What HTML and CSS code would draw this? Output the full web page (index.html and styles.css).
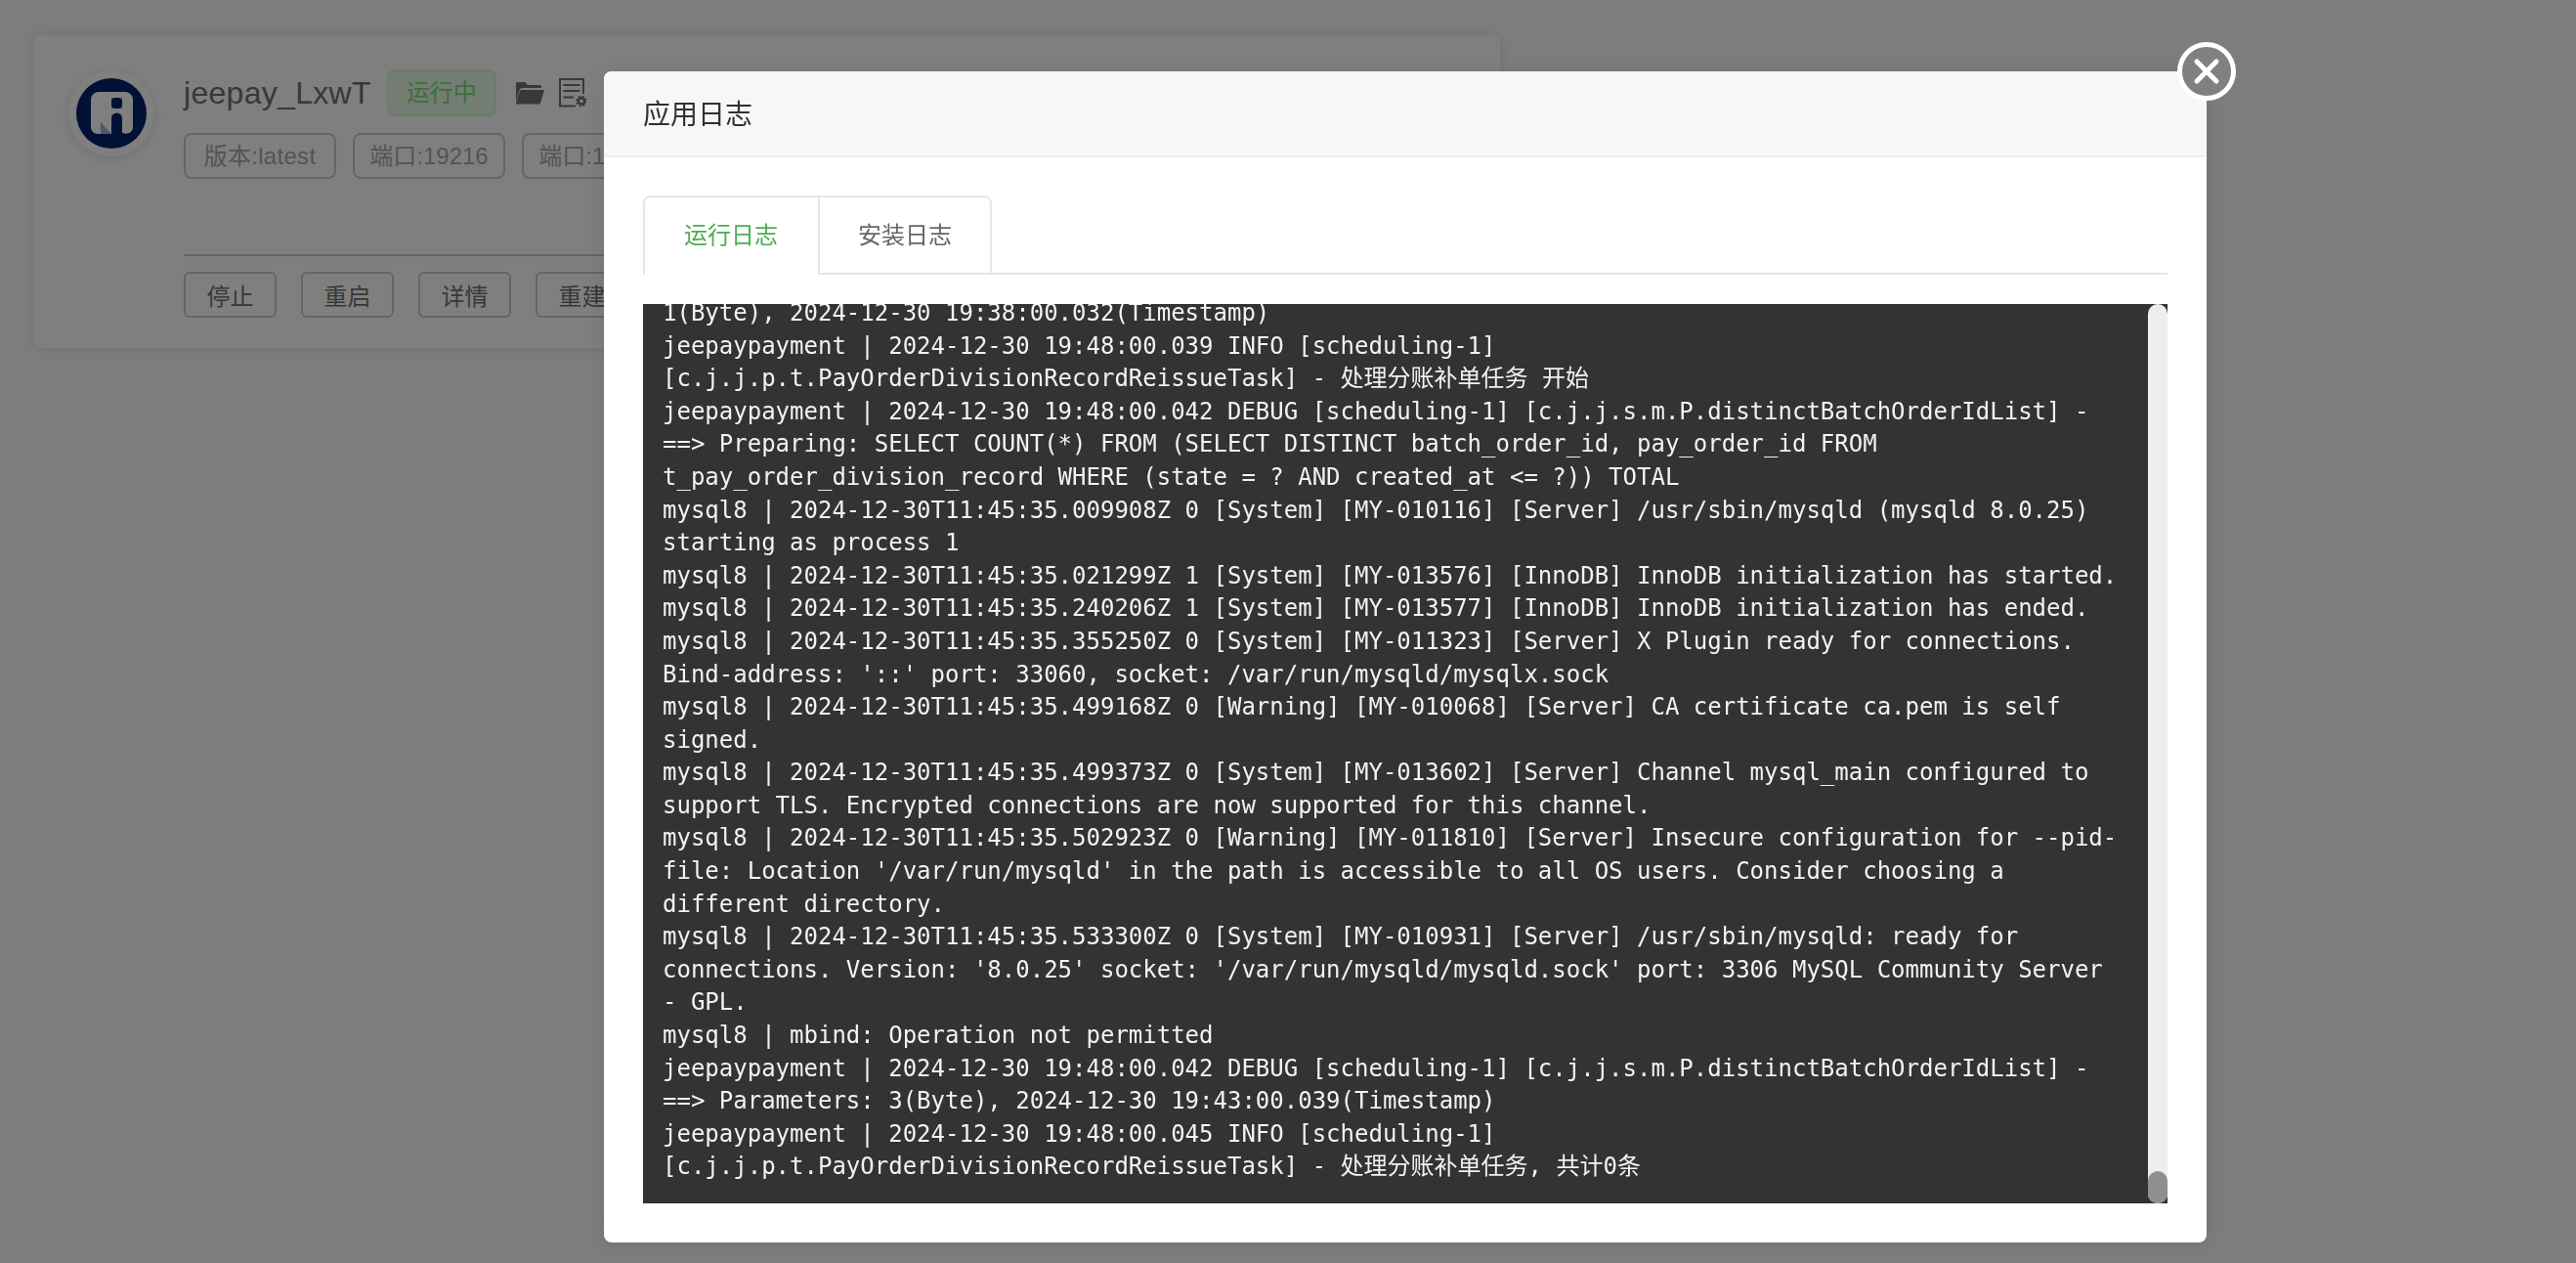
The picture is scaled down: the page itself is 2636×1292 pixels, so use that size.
FILE: index.html
```html
<!DOCTYPE html>
<html lang="zh-CN">
<head>
<meta charset="utf-8">
<title>应用日志</title>
<link rel="stylesheet" href="styles.css">
</head>
<body>
<main class="page">
  <section class="card">
    <div class="avatar">
      <svg class="logo" viewBox="0 0 72 72" aria-hidden="true">
        <circle cx="36" cy="36" r="36" fill="#03226a"/>
        <path fill="#fff" fill-rule="evenodd" d="M23 14H50a8 8 0 0 1 8 8V50a7 7 0 0 1-11 5.500V41a5.500 5.500 0 0 0-11 0V57H22a7 7 0 0 1-7-7V22a8 8 0 0 1 8-8ZM39 20a3 3 0 0 0-3 3v5a3 3 0 0 0 3 3h5a3 3 0 0 0 3-3v-5a3 3 0 0 0-3-3Z"/>
        <path fill="#9fb0d6" d="M25 45l11 12H25Z"/>
      </svg>
    </div>
    <div class="card-main">
      <div class="title-row">
        <span class="app-name">jeepay_LxwT</span>
        <span class="status">运行中</span>
        <svg class="folder" viewBox="0 0 30 24" aria-hidden="true">
          <path fill="#707070" d="M1 21V2.500A1.500 1.500 0 0 1 2.500 1H10l3 3h12.500A1.500 1.500 0 0 1 27 5.500V7H7.500A3 3 0 0 0 4.600 9.200L1 21Z"/>
          <path fill="#707070" d="M6.500 9H28.500a1.200 1.200 0 0 1 1.200 1.600L26.200 22a2 2 0 0 1-2 1.500H2.200a1 1 0 0 1-1-1.300L5 10a1.600 1.600 0 0 1 1.500-1Z"/>
        </svg>
        <svg class="doc" viewBox="0 0 28 30" aria-hidden="true">
          <path fill="none" stroke="#707070" stroke-width="2" d="M17 28.500H1V1H25V16"/>
          <path fill="none" stroke="#707070" stroke-width="2" d="M4.500 7H21.500M4.500 13H21.500M4.500 19.500H15"/>
          <circle cx="23" cy="23.500" r="3.200" fill="none" stroke="#707070" stroke-width="2.400"/>
          <circle cx="23" cy="23.500" r="5" fill="none" stroke="#707070" stroke-width="1.800" stroke-dasharray="2 1.930"/>
        </svg>
      </div>
      <div class="tag-row">
        <span class="tag tag-version">版本:latest</span>
        <span class="tag">端口:19216</span>
        <span class="tag">端口:19217</span>
      </div>
      <div class="action-row">
        <button class="action">停止</button>
        <button class="action">重启</button>
        <button class="action">详情</button>
        <button class="action">重建</button>
        <button class="action">升级</button>
      </div>
    </div>
  </section>
</main>

<div class="overlay">
  <div class="modal">
    <button class="close" aria-label="关闭">
      <svg viewBox="0 0 60 60" aria-hidden="true"><path d="M20 20L40 40M40 20L20 40" stroke="#fff" stroke-width="5" stroke-linecap="round"/></svg>
    </button>
    <header class="modal-head">应用日志</header>
    <div class="modal-body">
      <div class="tabs">
        <div class="tab-group">
          <span class="tab tab-active">运行日志</span>
          <span class="tab">安装日志</span>
        </div>
      </div>
      <div class="log">
        <div class="log-view">
          <div class="log-text">
<p>1(Byte), 2024-12-30 19:38:00.032(Timestamp)</p>
<p>jeepaypayment | 2024-12-30 19:48:00.039 INFO [scheduling-1] [c.j.j.p.t.PayOrderDivisionRecordReissueTask] - 处理分账补单任务 开始</p>
<p>jeepaypayment | 2024-12-30 19:48:00.042 DEBUG [scheduling-1] [c.j.j.s.m.P.distinctBatchOrderIdList] - ==&gt; Preparing: SELECT COUNT(*) FROM (SELECT DISTINCT batch_order_id, pay_order_id FROM t_pay_order_division_record WHERE (state = ? AND created_at &lt;= ?)) TOTAL</p>
<p>mysql8 | 2024-12-30T11:45:35.009908Z 0 [System] [MY-010116] [Server] /usr/sbin/mysqld (mysqld 8.0.25) starting as process 1</p>
<p>mysql8 | 2024-12-30T11:45:35.021299Z 1 [System] [MY-013576] [InnoDB] InnoDB initialization has started.</p>
<p>mysql8 | 2024-12-30T11:45:35.240206Z 1 [System] [MY-013577] [InnoDB] InnoDB initialization has ended.</p>
<p>mysql8 | 2024-12-30T11:45:35.355250Z 0 [System] [MY-011323] [Server] X Plugin ready for connections. Bind-address: '::' port: 33060, socket: /var/run/mysqld/mysqlx.sock</p>
<p>mysql8 | 2024-12-30T11:45:35.499168Z 0 [Warning] [MY-010068] [Server] CA certificate ca.pem is self signed.</p>
<p>mysql8 | 2024-12-30T11:45:35.499373Z 0 [System] [MY-013602] [Server] Channel mysql_main configured to support TLS. Encrypted connections are now supported for this channel.</p>
<p>mysql8 | 2024-12-30T11:45:35.502923Z 0 [Warning] [MY-011810] [Server] Insecure configuration for --pid-file: Location '/var/run/mysqld' in the path is accessible to all OS users. Consider choosing a different directory.</p>
<p>mysql8 | 2024-12-30T11:45:35.533300Z 0 [System] [MY-010931] [Server] /usr/sbin/mysqld: ready for connections. Version: '8.0.25' socket: '/var/run/mysqld/mysqld.sock' port: 3306 MySQL Community Server - GPL.</p>
<p>mysql8 | mbind: Operation not permitted</p>
<p>jeepaypayment | 2024-12-30 19:48:00.042 DEBUG [scheduling-1] [c.j.j.s.m.P.distinctBatchOrderIdList] - ==&gt; Parameters: 3(Byte), 2024-12-30 19:43:00.039(Timestamp)</p>
<p>jeepaypayment | 2024-12-30 19:48:00.045 INFO [scheduling-1] [c.j.j.p.t.PayOrderDivisionRecordReissueTask] - 处理分账补单任务, 共计0条</p>
          </div>
        </div>
        <div class="scroll-track"><div class="scroll-thumb"></div></div>
      </div>
    </div>
  </div>
</div>
</body>
</html>
```

FILE: styles.css
```css
* { box-sizing: border-box; }

html, body {
  height: 100%;
  margin: 0;
}

body {
  overflow: hidden;
  background: #fafafa;
  font-family: "Liberation Sans", "Noto Sans CJK SC", sans-serif;
}

.page {
  padding: 36px 34px;
}

.card {
  display: flex;
  gap: 30px;
  width: 1501px;
  height: 320px;
  padding: 35px 36px;
  background: #fff;
  border-radius: 8px;
  box-shadow: 0 0 12px rgba(0, 0, 0, 0.1);
}

.avatar {
  flex: none;
  width: 88px;
  height: 88px;
  margin-top: 1px;
  padding: 8px;
  background: #fff;
  border-radius: 50%;
  box-shadow: 0 2px 12px rgba(0, 0, 0, 0.12);
}

.logo {
  display: block;
  width: 72px;
  height: 72px;
}

.card-main {
  flex: 1;
  min-width: 0;
}

.title-row {
  display: flex;
  align-items: center;
  height: 48px;
}

.app-name {
  font-size: 32px;
  letter-spacing: 0.3px;
  color: #707070;
}

.status {
  margin-left: 16px;
  width: 112px;
  height: 48px;
  line-height: 44px;
  text-align: center;
  font-size: 24px;
  color: #78e078;
  background: #e6fae6;
  border: 2px solid #d2fad2;
  border-radius: 8px;
}

.folder {
  flex: none;
  width: 30px;
  height: 24px;
  margin-left: 19px;
}

.doc {
  flex: none;
  width: 28px;
  height: 30px;
  margin-left: 15px;
}

.tag-row {
  display: flex;
  gap: 17px;
  margin-top: 17px;
}

.tag {
  flex: none;
  min-width: 156px;
  height: 47px;
  line-height: 43px;
  text-align: center;
  font-size: 24px;
  color: #a8a8a8;
  background: #fff;
  border: 2px solid #c8cad0;
  border-radius: 8px;
}

.tag-version {
  letter-spacing: 0.3px;
}

.action-row {
  display: flex;
  gap: 25px;
  margin-top: 77px;
  padding-top: 16px;
  border-top: 2px solid #c8cad0;
}

.action {
  flex: none;
  width: 95px;
  height: 47px;
  padding: 0;
  font-family: inherit;
  font-size: 24px;
  color: #707070;
  background: #fff;
  border: 2px solid #c8cad0;
  border-radius: 6px;
}

.overlay {
  position: fixed;
  inset: 0;
  padding: 73px 0 0 618px;
  background: rgba(0, 0, 0, 0.5);
}

.modal {
  position: relative;
  width: 1640px;
  height: 1198px;
  background: #fff;
  border-radius: 8px;
  box-shadow: 0 2px 24px rgba(0, 0, 0, 0.1);
}

.close {
  position: absolute;
  top: -30px;
  right: -30px;
  width: 60px;
  height: 60px;
  padding: 0;
  background: #808080;
  border: 5px solid #fff;
  border-radius: 50%;
}

.close svg {
  display: block;
  width: 60px;
  height: 60px;
  margin: -5px;
}

.modal-head {
  height: 88px;
  padding: 0 40px;
  line-height: 84px;
  font-size: 28px;
  font-family: "Noto Sans CJK SC", sans-serif;
  color: #303133;
  background: #f7f7f7;
  border-bottom: 2px solid #eee;
  border-radius: 8px 8px 0 0;
}

.modal-body {
  padding: 39px 40px 40px;
}

.tabs {
  height: 81px;
  border-bottom: 2px solid #e4e7ed;
}

.tab-group {
  display: flex;
  width: 357px;
  height: 81px;
  border: 2px solid #e4e7ed;
  border-bottom: 0;
  border-radius: 8px 8px 0 0;
}

.tab {
  flex: none;
  width: 177px;
  height: 79px;
  padding-left: 40px;
  line-height: 74px;
  white-space: nowrap;
  font-size: 24px;
  font-family: "Noto Sans CJK SC", sans-serif;
  color: #666;
  border-bottom: 2px solid #e4e7ed;
}

.tab + .tab {
  width: 176px;
  padding-left: 39px;
  border-left: 2px solid #e4e7ed;
}

.tab-active {
  color: #4caf50;
  border-bottom-color: #fff;
}

.log {
  display: flex;
  height: 920px;
  margin-top: 30px;
  background: #333;
}

.log-view {
  flex: 1;
  min-width: 0;
  display: flex;
  flex-direction: column;
  justify-content: flex-end;
  padding: 0 20px 20px;
  overflow: hidden;
}

.log-text {
  flex: none;
  font-family: "DejaVu Sans Mono", "Noto Sans CJK SC", monospace;
  font-size: 24px;
  line-height: 33.600px;
  color: #f2f2f2;
}

.log-text p {
  margin: 0;
}

.scroll-track {
  flex: none;
  display: flex;
  flex-direction: column;
  justify-content: flex-end;
  width: 20px;
  background: #eee;
  border-radius: 10px;
}

.scroll-thumb {
  height: 33px;
  background: #8f8f8f;
  border-radius: 10px;
}
```
